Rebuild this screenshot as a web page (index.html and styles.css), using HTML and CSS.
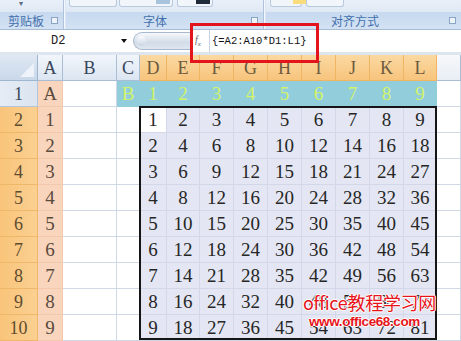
FILE: index.html
```html
<!DOCTYPE html>
<html>
<head>
<meta charset="utf-8">
<link rel="stylesheet" href="styles.css">
</head>
<body>
<div class="ribbon">
  <div class="group g1">
    <div class="gtop"><span class="mini">▾</span></div>
    <div class="glabel"><span>剪贴板</span><i class="launch"></i></div>
  </div>
  <div class="group g2">
    <div class="gtop"><span class="btn b1"></span><span class="btn b2"><em class="sw blue"></em></span><span class="btn b3"><em class="sw dark"></em></span></div>
    <div class="glabel"><span>字体</span><i class="launch"></i></div>
  </div>
  <div class="group g3">
    <div class="gtop"><span class="btn b4"><em class="sw yellow"></em></span><span class="btn b5"></span></div>
    <div class="glabel"><span>对齐方式</span><i class="launch"></i></div>
  </div>
</div>
<div class="fbar">
  <div class="namebox"><span class="nm">D2</span><i class="arrow"></i></div>
  <div class="pill"><i class="knob"></i></div>
  <div class="fx">f<sub>x</sub></div>
  <div class="formula">{=A2:A10*D1:L1}</div>
</div>
<div class="sheet">
  <div class="c corner"><svg width="14" height="14" viewBox="0 0 14 14"><polygon points="14,0 14,14 0,14" fill="#eef3f9"/></svg></div>
  <div class="c ch">A</div><div class="c ch">B</div><div class="c ch">C</div>
  <div class="c ch o">D</div><div class="c ch o">E</div><div class="c ch o">F</div><div class="c ch o">G</div><div class="c ch o">H</div><div class="c ch o">I</div><div class="c ch o">J</div><div class="c ch o">K</div><div class="c ch o">L</div>
  <div class="c ch e"></div>

  <div class="c rh l">1</div><div class="c pa">A</div><div class="c w"></div><div class="c bl">B</div>
  <div class="c bl">1</div><div class="c bl">2</div><div class="c bl">3</div><div class="c bl">4</div><div class="c bl">5</div><div class="c bl">6</div><div class="c bl">7</div><div class="c bl">8</div><div class="c bl">9</div><div class="c w"></div>

  <div class="c rh">2</div><div class="c pa">1</div><div class="c w"></div><div class="c w"></div>
  <div class="c lv act">1</div><div class="c lv">2</div><div class="c lv">3</div><div class="c lv">4</div><div class="c lv">5</div><div class="c lv">6</div><div class="c lv">7</div><div class="c lv">8</div><div class="c lv">9</div><div class="c w"></div>

  <div class="c rh">3</div><div class="c pa">2</div><div class="c w"></div><div class="c w"></div>
  <div class="c lv">2</div><div class="c lv">4</div><div class="c lv">6</div><div class="c lv">8</div><div class="c lv">10</div><div class="c lv">12</div><div class="c lv">14</div><div class="c lv">16</div><div class="c lv">18</div><div class="c w"></div>

  <div class="c rh">4</div><div class="c pa">3</div><div class="c w"></div><div class="c w"></div>
  <div class="c lv">3</div><div class="c lv">6</div><div class="c lv">9</div><div class="c lv">12</div><div class="c lv">15</div><div class="c lv">18</div><div class="c lv">21</div><div class="c lv">24</div><div class="c lv">27</div><div class="c w"></div>

  <div class="c rh">5</div><div class="c pa">4</div><div class="c w"></div><div class="c w"></div>
  <div class="c lv">4</div><div class="c lv">8</div><div class="c lv">12</div><div class="c lv">16</div><div class="c lv">20</div><div class="c lv">24</div><div class="c lv">28</div><div class="c lv">32</div><div class="c lv">36</div><div class="c w"></div>

  <div class="c rh">6</div><div class="c pa">5</div><div class="c w"></div><div class="c w"></div>
  <div class="c lv">5</div><div class="c lv">10</div><div class="c lv">15</div><div class="c lv">20</div><div class="c lv">25</div><div class="c lv">30</div><div class="c lv">35</div><div class="c lv">40</div><div class="c lv">45</div><div class="c w"></div>

  <div class="c rh">7</div><div class="c pa">6</div><div class="c w"></div><div class="c w"></div>
  <div class="c lv">6</div><div class="c lv">12</div><div class="c lv">18</div><div class="c lv">24</div><div class="c lv">30</div><div class="c lv">36</div><div class="c lv">42</div><div class="c lv">48</div><div class="c lv">54</div><div class="c w"></div>

  <div class="c rh">8</div><div class="c pa">7</div><div class="c w"></div><div class="c w"></div>
  <div class="c lv">7</div><div class="c lv">14</div><div class="c lv">21</div><div class="c lv">28</div><div class="c lv">35</div><div class="c lv">42</div><div class="c lv">49</div><div class="c lv">56</div><div class="c lv">63</div><div class="c w"></div>

  <div class="c rh">9</div><div class="c pa">8</div><div class="c w"></div><div class="c w"></div>
  <div class="c lv">8</div><div class="c lv">16</div><div class="c lv">24</div><div class="c lv">32</div><div class="c lv">40</div><div class="c lv">48</div><div class="c lv">56</div><div class="c lv">64</div><div class="c lv">72</div><div class="c w"></div>

  <div class="c rh">10</div><div class="c pa">9</div><div class="c w"></div><div class="c w"></div>
  <div class="c lv">9</div><div class="c lv">18</div><div class="c lv">27</div><div class="c lv">36</div><div class="c lv">45</div><div class="c lv">54</div><div class="c lv">63</div><div class="c lv">72</div><div class="c lv">81</div><div class="c w"></div>

  <div class="selection"></div>
</div>
<div class="redbox"></div>
<div class="watermark">
  <div class="wm1">office教程学习网</div>
  <div class="wm2">www.office68.com</div>
</div>
</body>
</html>
```

FILE: styles.css
```css
body {
  margin: 0;
  width: 461px;
  height: 341px;
  overflow: hidden;
  position: relative;
  background: #fff;
  font-family: "Liberation Serif", "Noto Sans CJK SC", serif;
}

/* ribbon */
.ribbon {
  height: 30px;
  display: flex;
  background: #dbe6f4;
  border-bottom: 1px solid #a7bdd6;
  box-sizing: border-box;
}
.group {
  display: flex;
  flex-direction: column;
  border-right: 1px solid #aec3db;
  box-shadow: 1px 0 0 #f4f8fc;
}
.g1 { width: 63px; }
.g2 { width: 197px; margin-left: 2px; }
.g3 { flex: 1; margin-left: 2px; border-right: none; box-shadow: none; }
.gtop {
  height: 12px;
  position: relative;
  display: flex;
  align-items: flex-start;
  background: linear-gradient(#e9f0f9, #dfe8f4);
}
.mini {
  font-size: 8px;
  color: #5a6a80;
  margin-left: 19px;
  line-height: 8px;
}
.btn {
  display: block;
  height: 6px;
  border: 1px solid #b8c9dd;
  border-top: none;
  border-radius: 0 0 3px 3px;
  background: #f2f6fb;
  position: relative;
}
.b1 { width: 46px; margin-left: 3px; }
.b2 { width: 52px; margin-left: 2px; }
.b3 { width: 34px; margin-left: 4px; }
.b4 { width: 30px; margin-left: 4px; }
.b5 { width: 36px; margin-left: 4px; }
.sw {
  display: block;
  position: absolute;
  top: 0;
  height: 4px;
}
.sw.blue { left: 36px; width: 14px; background: #a8c4dc; }
.sw.dark { left: 18px; width: 14px; background: #1e2a3a; }
.sw.yellow { left: 22px; width: 14px; background: #f9dc7c; }
.glabel {
  height: 17px;
  display: flex;
  align-items: center;
  background: linear-gradient(#c7d9ef, #d3e2f3);
  color: #4270ad;
  font-family: "Noto Sans CJK SC", sans-serif;
  font-size: 12px;
  line-height: 14px;
}
.g1 .glabel { padding-left: 8px; }
.g2 .glabel { padding-left: 77px; }
.g3 .glabel { padding-left: 65px; }
.launch {
  margin-left: auto;
  margin-right: 5px;
  width: 5px;
  height: 5px;
  border: 1px solid #8aa4c4;
  background: #eef3f9;
}

/* formula bar */
.fbar {
  height: 25px;
  display: flex;
  align-items: center;
  box-sizing: border-box;
  border-bottom: 3px solid #dde5ee;
  background: #fff;
}
.namebox {
  width: 130px;
  height: 100%;
  display: flex;
  align-items: center;
  position: relative;
}
.nm {
  margin-left: 51px;
  font-family: "Liberation Mono", monospace;
  font-size: 12px;
  color: #222;
}
.arrow {
  position: absolute;
  left: 121px;
  top: 9px;
  width: 0;
  height: 0;
  border-left: 3px solid transparent;
  border-right: 3px solid transparent;
  border-top: 4px solid #111;
}
.pill {
  width: 58px;
  height: 18px;
  box-sizing: border-box;
  margin-left: 3px;
  border: 1px solid #a9bace;
  border-right: none;
  border-radius: 9px 0 0 9px;
  background: linear-gradient(#f6f8fb, #d2dce8 60%, #dfe6ef);
  position: relative;
}
.knob {
  position: absolute;
  left: 3px;
  top: 3px;
  width: 9px;
  height: 10px;
  border-radius: 50%;
  background: linear-gradient(#fbfcfe, #c9d4e1);
}
.fx {
  width: 18px;
  font-family: "Liberation Serif", serif;
  font-style: italic;
  font-size: 10px;
  color: #666;
  padding-left: 4px;
  box-sizing: border-box;
}
.fx sub { font-size: 7px; }
.formula {
  margin-left: 0;
  height: 100%;
  flex: 1;
  display: flex;
  align-items: center;
  padding-left: 2px;
  border-left: 1px solid #c7d3e1;
  font-family: "Liberation Mono", monospace;
  font-size: 10.5px;
  color: #111;
}

/* sheet */
.sheet {
  display: grid;
  grid-template-columns: 38px 25px 54px 23px 27px 33px repeat(6, 34px) 33px 24px;
  grid-template-rows: repeat(11, 26px);
  position: relative;
}
.c {
  box-sizing: border-box;
  border-right: 1px solid #d0d7e5;
  border-bottom: 1px solid #d0d7e5;
  display: flex;
  align-items: center;
  justify-content: center;
  font-size: 19px;
  color: #262626;
  line-height: 1;
}
.corner {
  background: linear-gradient(#dfe8f3, #c9d8ea);
  border-color: #9eb6ce;
  align-items: flex-end;
  justify-content: flex-end;
  padding: 0 3px 3px 0;
}
.ch {
  background: linear-gradient(#f2f6fb, #dbe5f1);
  border-color: #a9bdd4;
  color: #38475a;
  font-size: 18px;
}
.ch.o {
  background: linear-gradient(#fbd9a2, #f7c47c);
  border-color: #f1b561;
  color: #6c5b40;
}
.ch.e {
  background: linear-gradient(#f6f8fb, #e9eef5);
}
.rh {
  background: linear-gradient(90deg, #f9c47a, #fbd091);
  border-color: #eeb769;
  color: #5e4c31;
  font-size: 18px;
}
.rh.l {
  background: linear-gradient(90deg, #e5ecf5, #dbe4ef);
  border-color: #b3c5da;
  color: #38475a;
}
.pa {
  background: #f9d5bd;
  border-color: #f3c8ad;
  color: #5a4a3c;
}
.w { background: #fff; }
.bl {
  background: #92cddc;
  border-color: #92cddc;
  color: #d2f36a;
}
.lv {
  background: #e4e7f3;
  border-color: #d3d8e8;
}
.act { background: #fff; }

.selection {
  position: absolute;
  left: 140px;
  top: 52px;
  width: 298px;
  height: 234px;
  box-sizing: border-box;
  border: 2px solid #151515;
  margin: -1px 0 0 -1px;
  pointer-events: none;
}

/* overlays */
.redbox {
  position: absolute;
  left: 190px;
  top: 23px;
  width: 129px;
  height: 40px;
  box-sizing: border-box;
  border: 3px solid #e3141c;
}
.watermark {
  position: absolute;
  left: 303px;
  top: 290px;
  color: #e8141b;
  font-family: "Noto Sans CJK SC", sans-serif;
  text-shadow: 1px 0 0 #fff, -1px 0 0 #fff, 0 1px 0 #fff, 0 -1px 0 #fff;
}
.wm1 {
  font-size: 18px;
  line-height: 24px;
  letter-spacing: -0.3px;
}
.wm2 {
  font-size: 13.5px;
  line-height: 16px;
  margin-left: 6px;
  font-family: "Liberation Sans", sans-serif;
  font-weight: bold;
  letter-spacing: -0.4px;
}
```
